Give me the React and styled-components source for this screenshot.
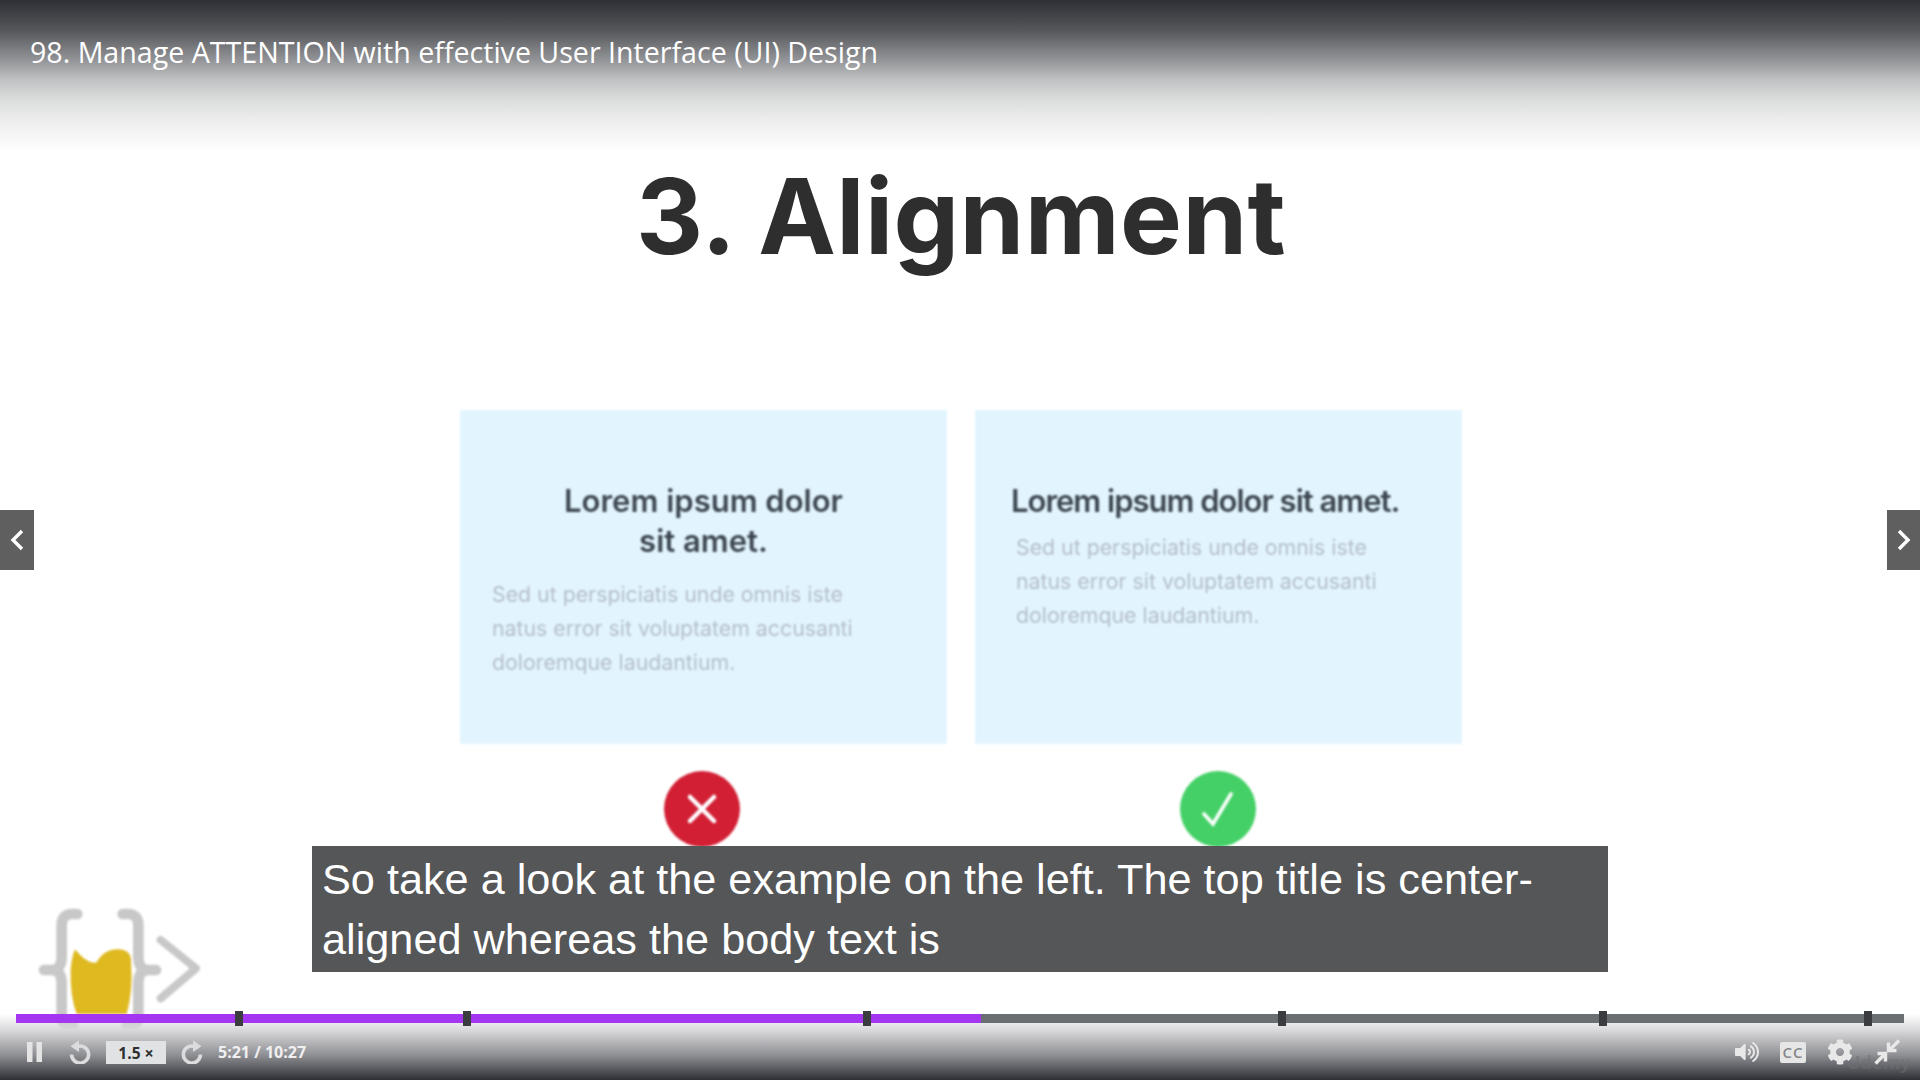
import styled, { createGlobalStyle } from 'styled-components'
import { FaCog, FaVolumeUp } from 'react-icons/fa'

const Global = createGlobalStyle`
  html, body { margin: 0; padding: 0; background: #fff; }
`

const Player = styled.div`
  position: relative;
  width: 1920px;
  height: 1080px;
  overflow: hidden;
  background: #fff;
`

const Slide = styled.div`
  display: flex;
  flex-direction: column;
  align-items: center;
  padding: 152px 0 0 2px;
`

const SlideTitle = styled.h1`
  margin: 0 0 130px;
  height: 128px;
  font: 700 104px/128px 'Inter', sans-serif;
  letter-spacing: 0.4px;
  color: #2e2e2f;
  filter: blur(0.7px);
`

const Columns = styled.div`
  display: grid;
  grid-template-columns: 487px 487px;
  gap: 28px;
  filter: blur(0.9px);
`

const Column = styled.div`
  display: flex;
  flex-direction: column;
  align-items: center;
  gap: 27px;
`

const Card = styled.div`
  box-sizing: border-box;
  width: 100%;
  height: 334px;
  padding: 71px 0 0 ${(p) => (p.$center ? 32 : 36)}px;
  background: #e2f5fe;
  font-family: 'Inter', sans-serif;
`

const CardHeading = styled.h3`
  margin: 0 0 ${(p) => (p.$center ? 16 : 9)}px;
  width: ${(p) => (p.$center ? '423px' : 'auto')};
  text-align: ${(p) => (p.$center ? 'center' : 'left')};
  font-size: 31px;
  line-height: 40px;
  font-weight: 600;
  color: #3d4650;
  letter-spacing: ${(p) => (p.$center ? '0' : '-1px')};
`

const CardBody = styled.p`
  margin: 0 0 0 ${(p) => (p.$center ? 0 : 5)}px;
  font-size: 21.3px;
  line-height: 34px;
  color: #b4bdcb;
  white-space: nowrap;
`

const Badge = styled.div`
  display: flex;
  align-items: center;
  justify-content: center;
  width: 76px;
  height: 76px;
  margin-right: ${(p) => p.$shift}px;
  border-radius: 50%;
  background: ${(p) => p.$color};
`

const LogoMark = styled.svg`
  position: absolute;
  left: 20px;
  top: 890px;
  width: 200px;
  height: 140px;
  filter: blur(1px);
`

const TopShade = styled.div`
  position: absolute;
  inset: 0 0 auto 0;
  height: 150px;
  background: linear-gradient(to bottom, #2f3036 0%, #55565a 20%, #939497 40%, #c0c1c2 53%, #dcdddd 67%, #ededed 80%, #f8f8f8 93%, #fdfdfd 100%);
`

const LectureTitle = styled.div`
  position: absolute;
  left: 30px;
  top: 32px;
  font: 400 28.6px/40px 'Open Sans', sans-serif;
  color: #fff;
`

const SideButton = styled.button`
  position: absolute;
  top: 510px;
  ${(p) => (p.$right ? 'right: 0;' : 'left: 0;')}
  display: flex;
  align-items: center;
  justify-content: center;
  width: ${(p) => (p.$right ? 33 : 34)}px;
  height: 60px;
  padding: 0;
  border: 0;
  background: #5f5f5f;
`

const Caption = styled.div`
  position: absolute;
  left: 312px;
  top: 846px;
  box-sizing: border-box;
  width: 1296px;
  height: 126px;
  padding: 3px 10px 0;
  background: #555658;
  color: #fff;
  font: 400 43.25px/60px 'Liberation Sans', Arial, sans-serif;
`

const BottomShade = styled.div`
  position: absolute;
  inset: auto 0 0 0;
  height: 66px;
  background: linear-gradient(to bottom, rgba(255, 255, 255, 0) 0%, #d8d8da 25%, #8f9094 62%, #2f3036 100%);
`

const Track = styled.div`
  position: absolute;
  left: 16px;
  right: 16px;
  top: 1014px;
  height: 9px;
  background: #6a6f73;
`

const Played = styled.div`
  height: 100%;
  background: #a435f0;
`

const Tick = styled.span`
  position: absolute;
  top: -3px;
  width: 8px;
  height: 15px;
  background: #3a3c40;
`

const Controls = styled.div`
  position: absolute;
  left: 0;
  right: 0;
  top: 1040px;
  height: 24px;
  display: flex;
  align-items: center;
  justify-content: space-between;
  padding: 0 20px 0 27px;
  box-sizing: border-box;
`

const ControlGroup = styled.div`
  display: flex;
  align-items: center;
  gap: ${(p) => p.$gap}px;
`

const TransportGroup = styled(ControlGroup)`
  gap: 15px;
`

const SpeedBox = styled.div`
  display: flex;
  align-items: center;
  justify-content: center;
  gap: 4px;
  box-sizing: border-box;
  width: 60px;
  height: 23px;
  padding-top: 2px;
  background: #e1e2e4;
  color: #2d2f31;
  font: 700 15.5px/21px 'Open Sans', sans-serif;
`

const SpeedMark = styled.span`
  font-size: 16px;
  font-weight: 700;
`

const TimeText = styled.span`
  color: #f0f0f1;
  font: 700 16px/24px 'Open Sans', sans-serif;
  margin-left: -12px;
`

const CcBox = styled.div`
  display: flex;
  align-items: center;
  justify-content: center;
  width: 26px;
  height: 21px;
  border-radius: 2px;
  background: #e6e6e7;
  color: #85868a;
  font: 600 15px/21px 'Open Sans', sans-serif;
  letter-spacing: 1px;
`

const Watermark = styled.span`
  position: absolute;
  left: 1847px;
  top: 1049px;
  font: 700 18px/26px 'Open Sans', sans-serif;
  color: #6f7074;
  opacity: 0.5;
`

const IconBox = styled.span`
  display: flex;
  color: #e8e8e9;
`

const ticks = [239, 467, 867, 1282, 1603, 1868]

function Pause() {
  return (
    <svg width="15" height="20" viewBox="0 0 15 20" fill="#e4e4e5">
      <rect width="5.5" height="20" />
      <rect x="9.5" width="5.5" height="20" />
    </svg>
  )
}

function Rewind({ flip }) {
  return (
    <svg width="22" height="24" viewBox="0 0 22 24" style={flip ? { transform: 'scaleX(-1)' } : undefined}>
      <path d="M8 6.6A8.5 8.5 0 1 1 2.6 14.5" fill="none" stroke="#dcdcde" strokeWidth="3.6" />
      <path d="M10 0.5V12L1.5 6.3Z" fill="#dcdcde" />
    </svg>
  )
}

function Compress() {
  return (
    <svg width="26" height="26" viewBox="0 0 26 26" fill="none" stroke="#e8e8e9" strokeWidth="3.4">
      <path d="M25 1.5L16.5 10" />
      <path d="M14.5 3.5V11.5H22.5" />
      <path d="M1.5 24.5L10 16" />
      <path d="M3.5 14.5H11.5V22.5" />
    </svg>
  )
}

function Logo() {
  return (
    <LogoMark viewBox="0 0 600 420" fill="none">
      <g stroke="#c8c8c8" strokeWidth="32" strokeLinecap="round" strokeLinejoin="round">
        <path d="M172 72H158Q125 72 125 105V200Q125 240 95 240H72H95Q125 240 125 280V380Q125 408 160 410" />
        <path d="M308 72H322Q355 72 355 105V200Q355 240 385 240H408H385Q355 240 355 280V380Q355 408 320 410" />
        <path d="M422 150L528 235L422 325" strokeWidth="24" />
      </g>
      <path d="M165 178Q200 222 228 218Q255 175 295 178Q335 180 333 215Q340 300 320 372H170Q150 320 152 240Q155 200 165 178Z" fill="#dfb920" />
    </LogoMark>
  )
}

export default function App() {
  return (
    <Player>
      <Global />
      <Slide>
        <SlideTitle>3. Alignment</SlideTitle>
        <Columns>
          <Column>
            <Card $center>
              <CardHeading $center>Lorem ipsum dolor<br />sit amet.</CardHeading>
              <CardBody $center>
                Sed ut perspiciatis unde omnis iste<br />
                natus error sit voluptatem accusanti<br />
                doloremque laudantium.
              </CardBody>
            </Card>
            <Badge $color="#d21f34" $shift={4}>
              <svg width="32" height="32" viewBox="0 0 32 32" stroke="#fff" strokeWidth="4.5" strokeLinecap="round">
                <path d="M4 4L28 28M28 4L4 28" />
              </svg>
            </Badge>
          </Column>
          <Column>
            <Card>
              <CardHeading>Lorem ipsum dolor sit amet.</CardHeading>
              <CardBody>
                Sed ut perspiciatis unde omnis iste<br />
                natus error sit voluptatem accusanti<br />
                doloremque laudantium.
              </CardBody>
            </Card>
            <Badge $color="#44d067" $shift={2}>
              <svg width="34" height="36" viewBox="0 0 34 36" fill="none" stroke="#fff" strokeWidth="3.6" strokeLinecap="round">
                <path d="M3 23L12 33L30 3" />
              </svg>
            </Badge>
          </Column>
        </Columns>
      </Slide>
      <Logo />
      <TopShade />
      <LectureTitle>98. Manage ATTENTION with effective User Interface (UI) Design</LectureTitle>
      <SideButton aria-label="Previous">
        <svg width="14" height="22" viewBox="0 0 14 22" fill="none" stroke="#fff" strokeWidth="3.4"><path d="M12 2L3 11L12 20" /></svg>
      </SideButton>
      <SideButton $right aria-label="Next">
        <svg width="14" height="22" viewBox="0 0 14 22" fill="none" stroke="#fff" strokeWidth="3.4"><path d="M2 2L11 11L2 20" /></svg>
      </SideButton>
      <Caption>So take a look at the example on the left. The top title is center-aligned whereas the body text is</Caption>
      <BottomShade />
      <Track>
        <Played style={{ width: `${((981 - 16) / 1888) * 100}%` }} />
        {ticks.map((x) => (
          <Tick key={x} style={{ left: x - 16 - 4 }} />
        ))}
      </Track>
      <Watermark>Udemy</Watermark>
      <Controls>
        <ControlGroup $gap={27}>
          <Pause />
          <TransportGroup>
            <Rewind />
            <SpeedBox>1.5 <SpeedMark>×</SpeedMark></SpeedBox>
            <Rewind flip />
          </TransportGroup>
          <TimeText>5:21 / 10:27</TimeText>
        </ControlGroup>
        <ControlGroup $gap={21}>
          <IconBox><FaVolumeUp size={24} /></IconBox>
          <CcBox>CC</CcBox>
          <IconBox><FaCog size={26} /></IconBox>
          <Compress />
        </ControlGroup>
      </Controls>
    </Player>
  )
}
